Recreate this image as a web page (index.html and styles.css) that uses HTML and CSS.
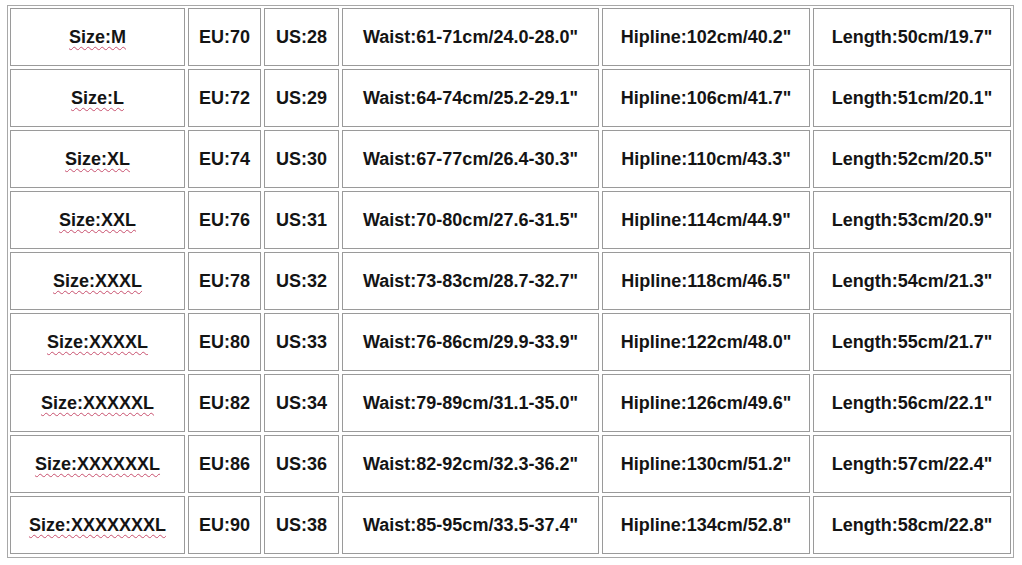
FILE: index.html
```html
<!DOCTYPE html>
<html>
<head>
<meta charset="utf-8">
<link rel="stylesheet" href="styles.css">
</head>
<body>
<div class="sheet">
  <div class="cell"><span class="spell">Size:M</span></div><div class="cell">EU:70</div><div class="cell">US:28</div><div class="cell">Waist:61-71cm/24.0-28.0"</div><div class="cell">Hipline:102cm/40.2"</div><div class="cell">Length:50cm/19.7"</div>
  <div class="cell"><span class="spell">Size:L</span></div><div class="cell">EU:72</div><div class="cell">US:29</div><div class="cell">Waist:64-74cm/25.2-29.1"</div><div class="cell">Hipline:106cm/41.7"</div><div class="cell">Length:51cm/20.1"</div>
  <div class="cell"><span class="spell">Size:XL</span></div><div class="cell">EU:74</div><div class="cell">US:30</div><div class="cell">Waist:67-77cm/26.4-30.3"</div><div class="cell">Hipline:110cm/43.3"</div><div class="cell">Length:52cm/20.5"</div>
  <div class="cell"><span class="spell">Size:XXL</span></div><div class="cell">EU:76</div><div class="cell">US:31</div><div class="cell">Waist:70-80cm/27.6-31.5"</div><div class="cell">Hipline:114cm/44.9"</div><div class="cell">Length:53cm/20.9"</div>
  <div class="cell"><span class="spell">Size:XXXL</span></div><div class="cell">EU:78</div><div class="cell">US:32</div><div class="cell">Waist:73-83cm/28.7-32.7"</div><div class="cell">Hipline:118cm/46.5"</div><div class="cell">Length:54cm/21.3"</div>
  <div class="cell"><span class="spell">Size:XXXXL</span></div><div class="cell">EU:80</div><div class="cell">US:33</div><div class="cell">Waist:76-86cm/29.9-33.9"</div><div class="cell">Hipline:122cm/48.0"</div><div class="cell">Length:55cm/21.7"</div>
  <div class="cell"><span class="spell">Size:XXXXXL</span></div><div class="cell">EU:82</div><div class="cell">US:34</div><div class="cell">Waist:79-89cm/31.1-35.0"</div><div class="cell">Hipline:126cm/49.6"</div><div class="cell">Length:56cm/22.1"</div>
  <div class="cell"><span class="spell">Size:XXXXXXL</span></div><div class="cell">EU:86</div><div class="cell">US:36</div><div class="cell">Waist:82-92cm/32.3-36.2"</div><div class="cell">Hipline:130cm/51.2"</div><div class="cell">Length:57cm/22.4"</div>
  <div class="cell"><span class="spell">Size:XXXXXXXL</span></div><div class="cell">EU:90</div><div class="cell">US:38</div><div class="cell">Waist:85-95cm/33.5-37.4"</div><div class="cell">Hipline:134cm/52.8"</div><div class="cell">Length:58cm/22.8"</div>
</div>
</body>
</html>
```

FILE: styles.css
```css
html, body {
  margin: 0;
  padding: 0;
  background: #ffffff;
}

body {
  padding: 5px 0 0 7px;
  font-family: "Liberation Sans", Arial, sans-serif;
}

.sheet {
  box-sizing: border-box;
  width: 1007px;
  display: grid;
  grid-template-columns: 175px 73px 75px 257px 208px 198px;
  grid-auto-rows: 58px;
  gap: 3px;
  padding: 2px 2px 3px 2px;
  border: 1px solid #a8a8a8;
  background: #ffffff;
}

.cell {
  box-sizing: border-box;
  display: flex;
  align-items: center;
  justify-content: center;
  border: 1px solid #9a9a9a;
  font-weight: bold;
  font-size: 18px;
  color: #141414;
  white-space: nowrap;
}

.spell {
  text-decoration: underline wavy #c8506e;
  text-decoration-thickness: 1px;
  text-underline-offset: 3px;
}
```
